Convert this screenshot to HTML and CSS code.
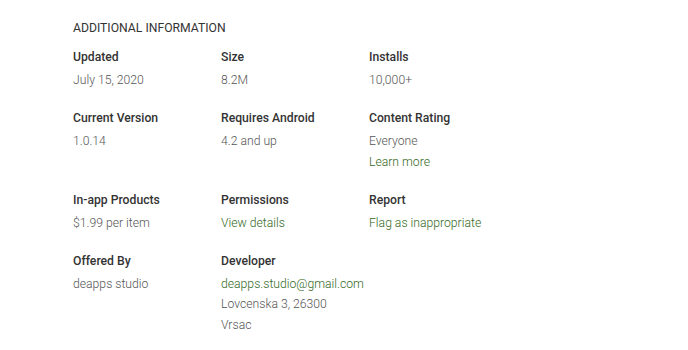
FILE: index.html
```html
<!DOCTYPE html>
<html lang="en">

<head>
    <meta charset="UTF-8">
    <meta name="viewport" content="width=device-width, initial-scale=1.0">
    <title>Additional Information</title>
    <link rel="stylesheet" href="styles.css">
</head>

<body>
    <div class="info">
        <h2>Additional Information</h2>

        <div class="grid">
            <div class="cell">
                <div class="label">Updated</div>
                <div class="value">July 15, 2020</div>
            </div>
            <div class="cell">
                <div class="label">Size</div>
                <div class="value">8.2M</div>
            </div>
            <div class="cell">
                <div class="label">Installs</div>
                <div class="value">10,000+</div>
            </div>

            <div class="cell">
                <div class="label">Current Version</div>
                <div class="value">1.0.14</div>
            </div>
            <div class="cell">
                <div class="label">Requires Android</div>
                <div class="value">4.2 and up</div>
            </div>
            <div class="cell">
                <div class="label">Content Rating</div>
                <div class="value">Everyone</div>
                <div class="value"><a href="#">Learn more</a></div>
            </div>

            <div class="cell">
                <div class="label">In-app Products</div>
                <div class="value">$1.99 per item</div>
            </div>
            <div class="cell">
                <div class="label">Permissions</div>
                <div class="value"><a href="#">View details</a></div>
            </div>
            <div class="cell">
                <div class="label">Report</div>
                <div class="value"><a href="#">Flag as inappropriate</a></div>
            </div>

            <div class="cell">
                <div class="label">Offered By</div>
                <div class="value">deapps studio</div>
            </div>
            <div class="cell">
                <div class="label">Developer</div>
                <div class="value"><a href="#">deapps.studio@gmail.com</a></div>
                <div class="value">Lovcenska 3, 26300</div>
                <div class="value">Vrsac</div>
            </div>
        </div>
    </div>
</body>

</html>
```

FILE: styles.css
```css
body {
    margin: 0;
    background-color: #fff;
    font-family: Roboto, Arial, sans-serif;
    font-size: 12.2px;
    color: #333;
}

.info {
    padding: 18px 0 0 73px;
}

.info h2 {
    margin: 0 0 9px 0;
    font-size: 12.2px;
    font-weight: 400;
    line-height: 20px;
    text-transform: uppercase;
    color: #333;
}

.grid {
    display: grid;
    grid-template-columns: repeat(3, 148px);
    row-gap: 17.5px;
}

.label {
    font-weight: 500;
    line-height: 20px;
    margin-bottom: 3px;
    color: #333;
}

.value {
    font-weight: 300;
    line-height: 20.5px;
    color: #555;
}

.value a {
    color: #33691e;
    text-decoration: none;
}
```
